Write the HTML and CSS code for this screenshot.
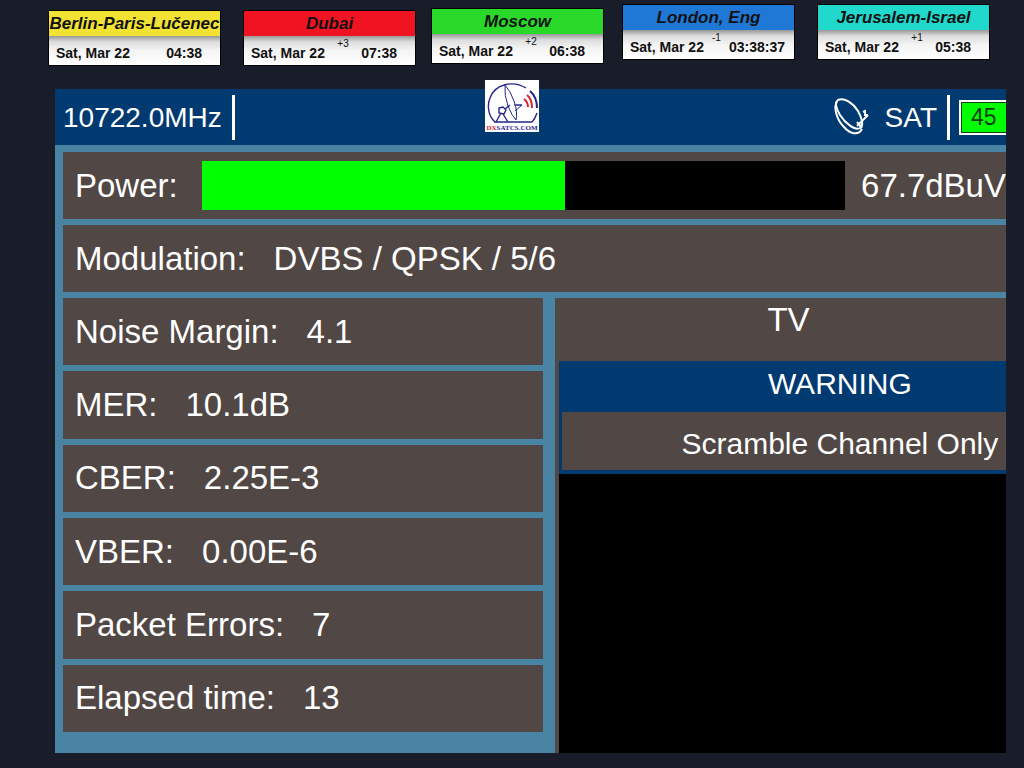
FILE: index.html
```html
<!DOCTYPE html>
<html lang="en">
<head>
    <meta charset="UTF-8">
    <meta name="viewport" content="width=device-width, initial-scale=1.0">
    <title>10722.0MHz - DXSATCS.COM</title>
    <link rel="stylesheet" href="styles.css">
</head>
<body>
    <!-- World clocks -->
    <div class="clocks">
        <div class="clock low">
            <h2 class="city yellow">Berlin-Paris-Lučenec</h2>
            <div class="time-row"><span>Sat, Mar 22</span><time>04:38</time></div>
        </div>
        <div class="clock low">
            <h2 class="city red">Dubai</h2>
            <div class="time-row"><span>Sat, Mar 22</span><sup>+3</sup><time>07:38</time></div>
        </div>
        <div class="clock mid">
            <h2 class="city green">Moscow</h2>
            <div class="time-row"><span>Sat, Mar 22</span><sup>+2</sup><time>06:38</time></div>
        </div>
        <div class="clock high">
            <h2 class="city blue">London, Eng</h2>
            <div class="time-row seconds"><span>Sat, Mar 22</span><sup>-1</sup><time>03:38:37</time></div>
        </div>
        <div class="clock high">
            <h2 class="city cyan">Jerusalem-Israel</h2>
            <div class="time-row"><span>Sat, Mar 22</span><sup>+1</sup><time>05:38</time></div>
        </div>
    </div>

    <!-- Logo over the top edge of the meter -->
    <div class="logo">
        <svg viewBox="0 0 54 44" fill="none">
            <path d="M10 42C3 36 2 25 5 18C10 4 28 0 41 8M52 33Q50 39 47 42" stroke="#24268c" stroke-width="1.4"/>
            <path d="M20 5Q19 15 23 26Q27 36 31 40Q33 33 29 21Q25 10 20 5Z" fill="#fff" stroke="#24268c"/>
            <path d="M29 25L37 25L30 31M31 25h6" stroke="#24268c"/>
            <path d="M14 28l4-1 3 3-2 4-5-1zM20 29l5-4M16 33l-5 9M18 34l5 8M9 42h38" stroke="#24268c" stroke-width="1.4"/>
            <path d="M39 19q4 3 4 8M42 15q5 4 5 13" stroke="#d8232a" stroke-width="2"/>
            <path d="M45 11q7 6 7 17" stroke="#24268c" stroke-width="2"/>
        </svg>
        <span><b>DX</b>SATCS.COM</span>
    </div>

    <main class="screen">
        <header class="top-bar">
            <span class="freq">10722.0MHz</span>
            <svg class="dish" viewBox="0 0 38 40" fill="none" stroke="#fff" stroke-width="2">
                <path d="M6 3C12 0 21 6 26 14C30 21 32 29 28 31C23 34 13 26 8 18C4 11 3 5 6 3Z"/>
                <path d="M5 4C1 11 5 23 12 30C18 37 26 39 30 32"/>
                <path d="M25 29L36 18M31 15L33 14L33 18L36 18M25 25l5 6"/>
            </svg>
            <span class="sat">SAT</span>
            <span class="battery">45</span>
        </header>

        <div class="panel">
            <div class="row power">
                <span>Power:</span>
                <div class="bar" role="meter" aria-label="Power" aria-valuemin="0" aria-valuemax="120" aria-valuenow="67.7">
                    <div class="bar-fill" style="width: 56.5%"></div>
                </div>
                <span class="level">67.7dBuV</span>
            </div>
            <div class="row"><span>Modulation:</span><span>DVBS / QPSK / 5/6</span></div>

            <div class="split">
                <div class="readings">
                    <div class="row"><span>Noise Margin:</span><span>4.1</span></div>
                    <div class="row"><span>MER:</span><span>10.1dB</span></div>
                    <div class="row"><span>CBER:</span><span>2.25E-3</span></div>
                    <div class="row"><span>VBER:</span><span>0.00E-6</span></div>
                    <div class="row"><span>Packet Errors:</span><span>7</span></div>
                    <div class="row"><span>Elapsed time:</span><span>13</span></div>
                </div>
                <section class="tv">
                    <h1>TV</h1>
                    <div class="video">
                        <div class="warning">
                            <h3>WARNING</h3>
                            <p>Scramble Channel Only</p>
                        </div>
                    </div>
                </section>
            </div>
        </div>
    </main>
</body>
</html>
```
FILE: styles.css
```css
* {
    box-sizing: border-box;
    margin: 0;
    padding: 0;
}

body {
    min-height: 100vh;
    display: flex;
    flex-direction: column;
    padding-bottom: 15px;
    position: relative;
    overflow-x: hidden;
    background: #191c29;
    color: #fff;
    font-family: "Liberation Sans", Arial, sans-serif;
}

/* clocks */
.clocks {
    display: grid;
    grid-template-columns: 195fr 188fr 191fr 195fr 173fr;
    align-items: start;
    min-height: 89px;
    padding: 0 34px 0 48px;
}
.clock {
    width: 173px;
    border: 1px solid #000;
    color: #111;
}
.low { margin-top: 10px; }
.mid { margin-top: 8px; }
.high { margin-top: 4px; }

.city {
    font-size: 17px;
    line-height: 25px;
    font-style: italic;
    text-align: center;
    white-space: nowrap;
}
.yellow { background: #f2e233; }
.red { background: #f01423; }
.green { background: #29d829; }
.blue { background: #1f78d6; }
.cyan { background: #20d8cc; }

.time-row {
    display: flex;
    justify-content: space-between;
    height: 29px;
    padding: 3px 18px 0 7px;
    background: linear-gradient(#989898, #dcdcdc 20%, #f4f4f4 50%, #fff);
    font-size: 14px;
    font-weight: bold;
    line-height: 28px;
    white-space: nowrap;
}
.time-row.seconds { padding-right: 9px; }
.time-row sup {
    font-size: 10px;
    font-weight: normal;
    line-height: 10px;
}

/* logo */
.logo {
    position: absolute;
    top: 80px;
    left: 50%;
    width: 54px;
    height: 52px;
    transform: translateX(-50%);
    background: #fff;
}
.logo svg {
    display: block;
    width: 54px;
    height: 44px;
}
.logo span {
    display: block;
    color: #24268c;
    font: bold 7px/8px "Liberation Serif", serif;
    text-align: center;
}
.logo b { color: #d8232a; }

/* meter screen */
.screen {
    flex: 1;
    display: flex;
    flex-direction: column;
    margin: 0 18px 0 55px;
    overflow: hidden;
    background: #4984a4;
}
.top-bar {
    display: flex;
    align-items: center;
    height: 56px;
    padding-left: 8px;
    background: #003a70;
    font-size: 28px;
}
.freq,
.sat {
    line-height: 45px;
    padding-right: 10px;
    border-right: 3px solid #fff;
}
.dish {
    width: 38px;
    height: 40px;
    margin-left: auto;
    margin-right: 15px;
}
.battery {
    width: 47px;
    margin-left: 9px;
    padding-left: 10px;
    border: 2px solid #fff;
    border-right: none;
    background: #0f0;
    box-shadow: inset 1px 1px #143c14, inset 0 -1px #143c14;
    color: #143c14;
    font-size: 23px;
    line-height: 31px;
}

.panel {
    flex: 1;
    display: flex;
    flex-direction: column;
    gap: 6px;
    padding: 7px 0 0 8px;
}
.row {
    display: flex;
    align-items: center;
    gap: 28px;
    min-height: 67px;
    padding-left: 12px;
    background: #514744;
    font-size: 33px;
    white-space: nowrap;
}
.row.power { gap: 24px; }
.bar {
    flex: 1;
    height: 49px;
    background: #000;
}
.bar-fill {
    height: 100%;
    background: #0f0;
}
.level { margin-left: -8px; }

.split {
    flex: 1;
    display: grid;
    grid-template-columns: 480fr 451fr;
    gap: 12px;
}
.readings {
    display: flex;
    flex-direction: column;
    gap: 6px;
    padding-bottom: 21px;
}
.readings .row { flex: 1; }

.tv {
    min-width: 0;
    display: flex;
    flex-direction: column;
    padding-left: 4px;
    background: #514744;
}
.tv h1 {
    height: 63px;
    padding-left: 12px;
    font-size: 33px;
    font-weight: normal;
    line-height: 43px;
    text-align: center;
}
.video {
    flex: 1;
    background: #000;
}
/* the box runs past the right edge of the screen */
.warning {
    width: 125%;
    border: solid #003a70;
    border-width: 0 0 4px 3px;
    background: #514744;
    text-align: center;
}
.warning h3 {
    background: #003a70;
    font-size: 30px;
    font-weight: normal;
    line-height: 45px;
    padding-bottom: 6px;
}
.warning p {
    padding-top: 6px;
    font-size: 30px;
    line-height: 52px;
    white-space: nowrap;
}
```
